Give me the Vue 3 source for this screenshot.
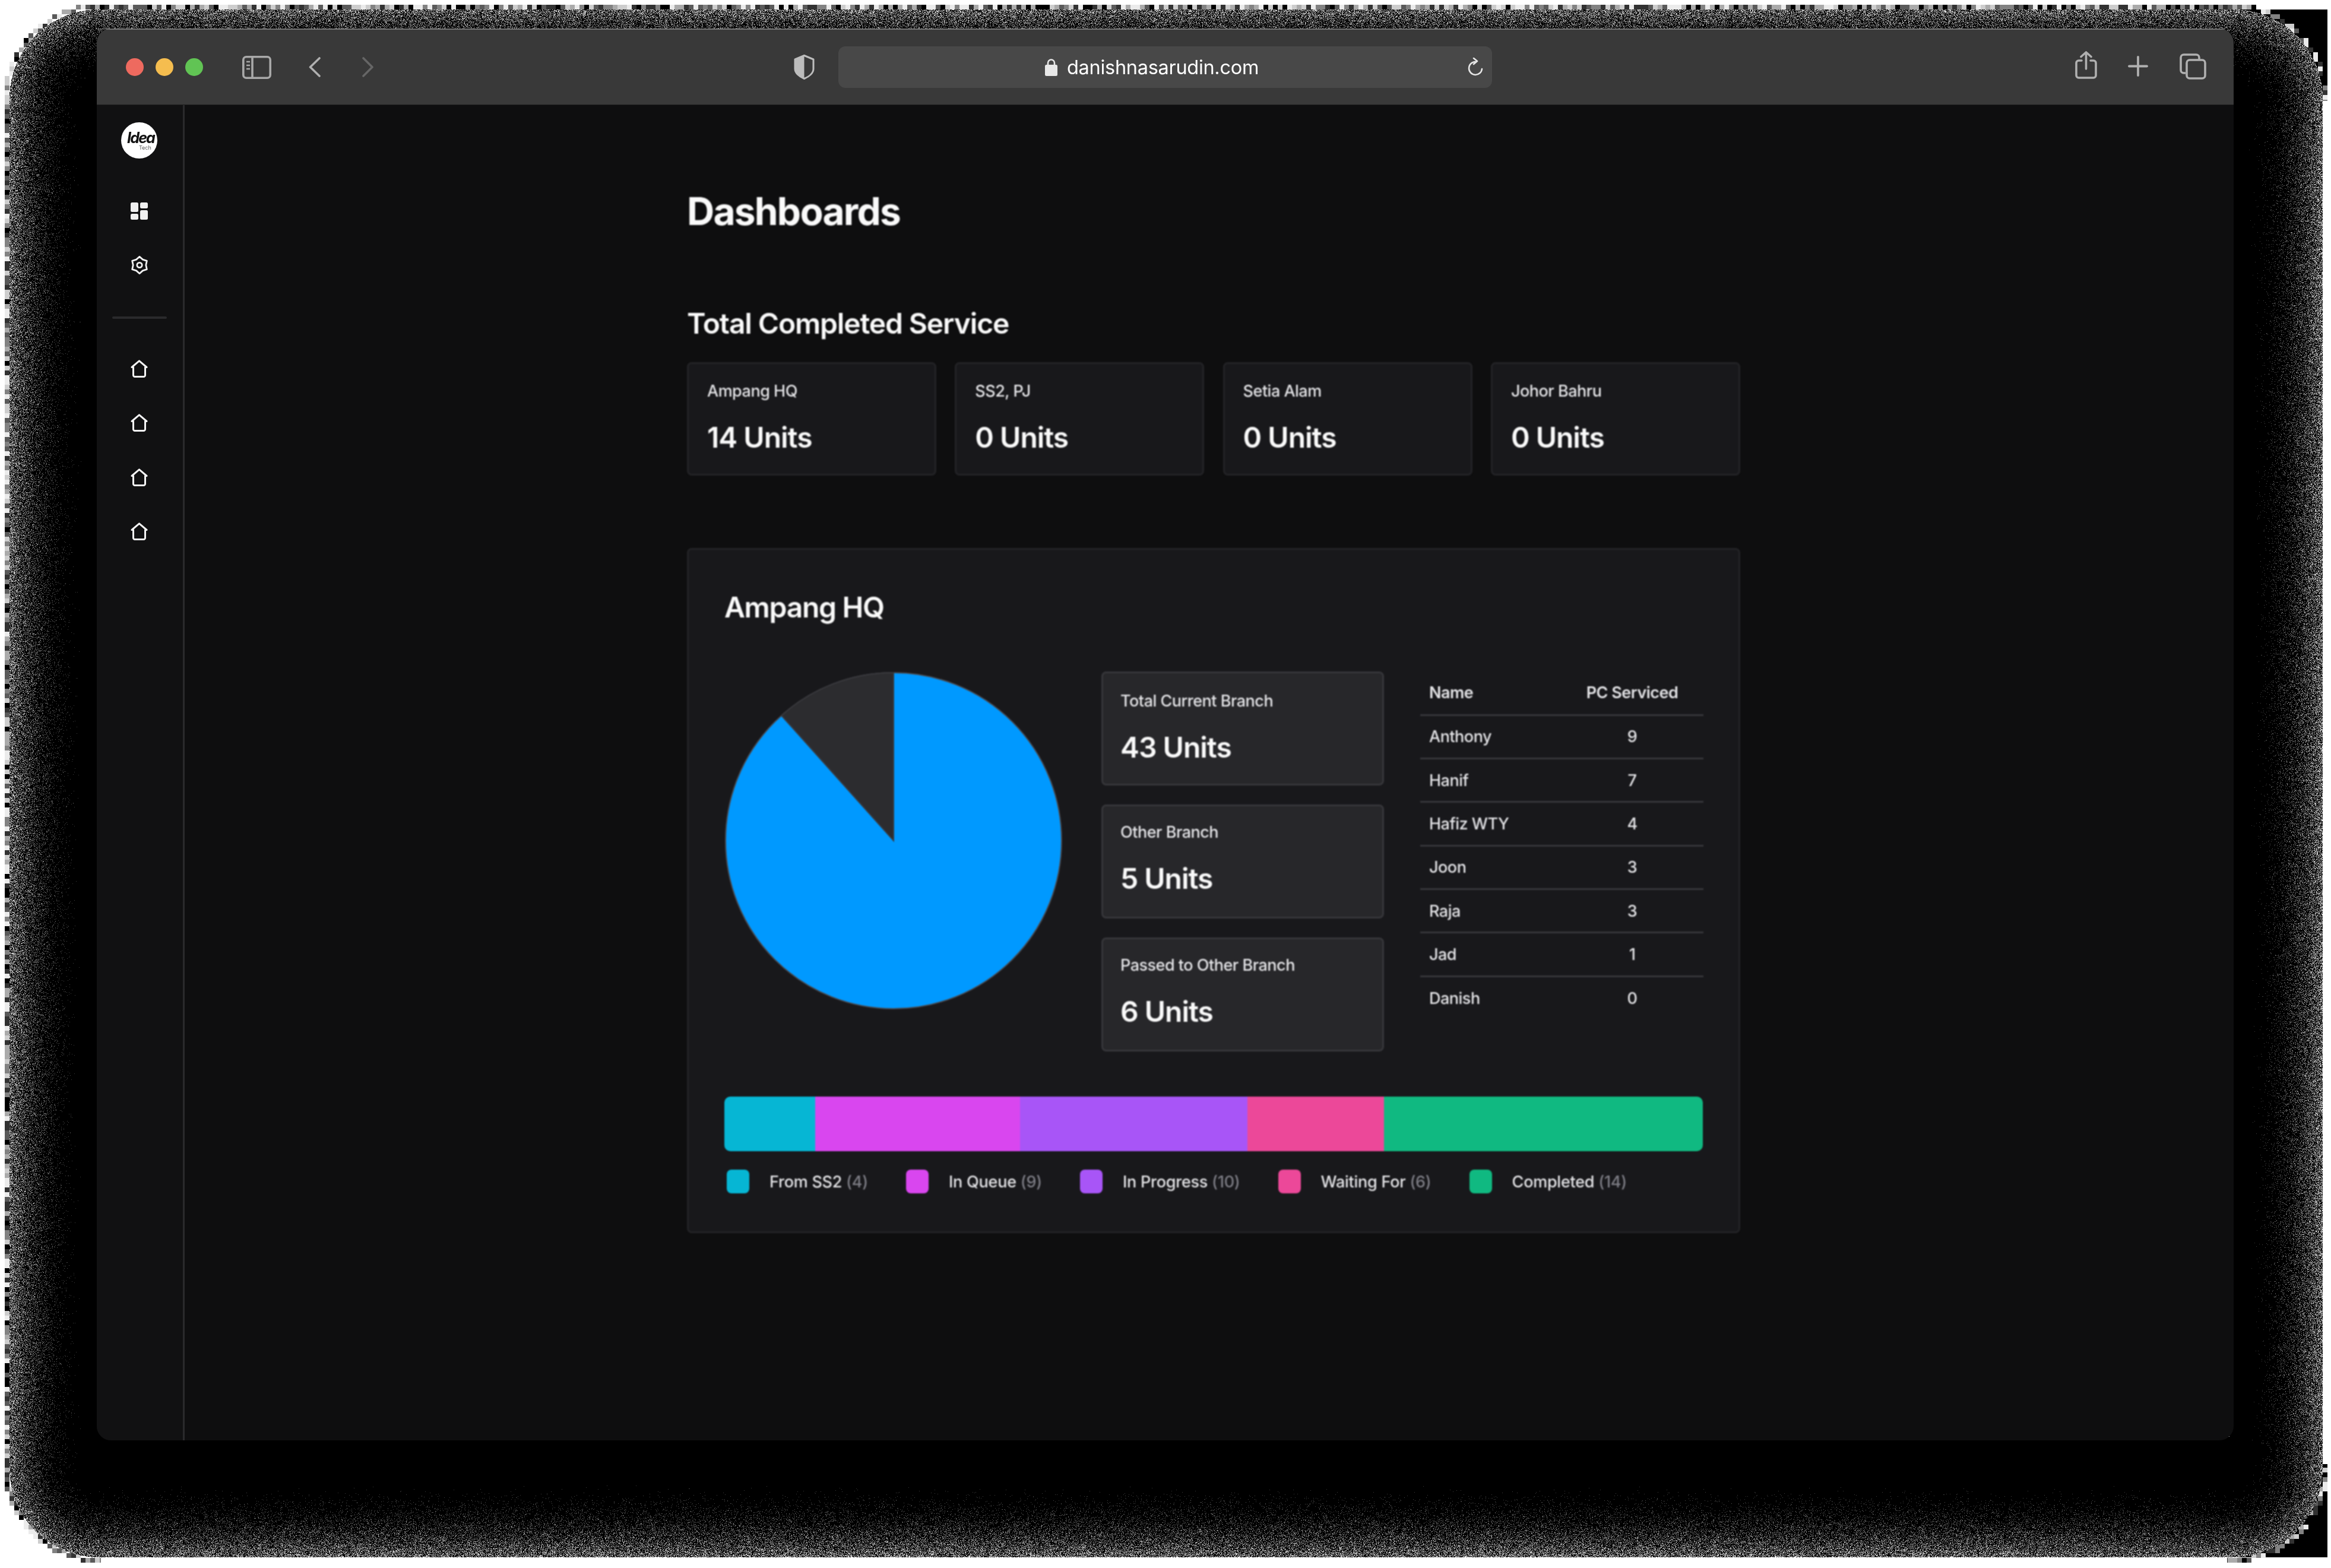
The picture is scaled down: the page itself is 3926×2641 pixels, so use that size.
<script setup>
import { onMounted, ref } from 'vue'

const canvas = ref(null)

const branches = [
  { name: 'Ampang HQ', value: '14 Units' },
  { name: 'SS2, PJ', value: '0 Units' },
  { name: 'Setia Alam', value: '0 Units' },
  { name: 'Johor Bahru', value: '0 Units' }
]
const stats = [
  { name: 'Total Current Branch', value: '43 Units' },
  { name: 'Other Branch', value: '5 Units' },
  { name: 'Passed to Other Branch', value: '6 Units' }
]
const people = [
  ['Anthony', 9], ['Hanif', 7], ['Hafiz WTY', 4], ['Joon', 3], ['Raja', 3], ['Jad', 1], ['Danish', 0]
]
const stages = [
  { name: 'From SS2', n: 4, color: '#06b6d4' },
  { name: 'In Queue', n: 9, color: '#d946ef' },
  { name: 'In Progress', n: 10, color: '#a855f7' },
  { name: 'Waiting For', n: 6, color: '#ec4899' },
  { name: 'Completed', n: 14, color: '#10b981' }
]

const R = 283
const angle = (5 / 43) * Math.PI * 2
const sliceX = 285 - R * Math.sin(angle)
const sliceY = 285 - R * Math.cos(angle)
const slicePath = `M285 285 L285 2 A${R} ${R} 0 0 0 ${sliceX.toFixed(2)} ${sliceY.toFixed(2)} Z`

const gearPts = []
for (let i = 0; i < 12; i++) {
  const a = (i * Math.PI) / 6 - Math.PI / 2
  const r = i % 2 === 0 ? 14.2 : 10.8
  gearPts.push(`${(15 + r * Math.cos(a)).toFixed(2)},${(15.5 + r * Math.sin(a)).toFixed(2)}`)
}
const gearPoly = gearPts.join(' ')

onMounted(() => {
  const W = 3926
  const H = 2641
  const ctx = canvas.value.getContext('2d')
  const img = ctx.createImageData(W, H)
  const buf = new Uint32Array(img.data.buffer)
  let seed = 12345
  const rnd = () => {
    seed = (seed * 1664525 + 1013904223) >>> 0
    return ((seed >>> 8) & 0xffff) / 65536
  }
  const x0 = 16, y0 = 16, x1 = 3912, y1 = 2623, r = 150
  const cx = (x0 + x1) / 2, cy = (y0 + y1) / 2
  const hx = (x1 - x0) / 2 - r, hy = (y1 - y0) / 2 - r
  const sdf = (x, y) => {
    const qx = Math.abs(x - cx) - hx
    const qy = Math.abs(y - cy) - hy
    const ax = Math.max(qx, 0), ay = Math.max(qy, 0)
    return Math.sqrt(ax * ax + ay * ay) + Math.min(Math.max(qx, qy), 0) - r
  }
  const gray = (v) => (255 << 24 | v << 16 | v << 8 | v) >>> 0
  const levels = [0, 50, 90, 130, 170, 205, 235]
  const band = 125
  for (let y = 0; y < H; y++) {
    for (let x = 0; x < W; x++) {
      const i = y * W + x
      if (x > 170 && x < 3755 && y > 55 && y < 2420) continue
      const sd = sdf(x + 0.5, y + 0.5)
      if (sd <= 0) {
        let v = 0
        const d = -sd
        if (d < band) {
          const f = 1 - d / band
          if (rnd() < 0.62 * Math.pow(f, 2.1)) {
            v = Math.round(55 + rnd() * 200 * Math.pow(f, 1.4))
          }
        }
        buf[i] = gray(v)
        continue
      }
      if (x >= 3762 && x < 3920 && y < 2623 && ((y >= 16 && y < 166) || y >= 2473)) buf[i] = gray(0)
      const bx = (x >> 3) * 8 + 4
      const by = (y >> 3) * 8 + 4
      const bsd = sdf(bx, by)
      if (bsd > 0 && bsd < 8) {
        const corner = (x < 170 || x > 3750) && (y < 170 || y > 2465)
        if (corner || (x < 3800 && y < 2500)) {
          const h = Math.abs(Math.imul(bx, 73856093) ^ Math.imul(by, 19349663) ^ 0x5bd1e995)
          buf[i] = gray(levels[(h >>> 7) % levels.length])
        }
      }
    }
  }
  ctx.putImageData(img, 0, 0)
})
</script>

<template>
  <div class="page">
    <canvas ref="canvas" class="shadow" width="3926" height="2641"></canvas>
    <div class="window">
      <header class="titlebar">
        <div class="lights">
          <span class="light red"></span><span class="light yellow"></span><span class="light green"></span>
        </div>
        <svg class="i-side" width="49" height="39" viewBox="0 0 49 39" fill="none" stroke="#a9a9a9" stroke-width="3.6">
          <rect x="1.8" y="1.8" width="45.4" height="35.4" rx="5" />
          <path d="M17 2v35" />
          <path d="M7 10h6M7 16h6M7 22h6" stroke-width="2.6" />
        </svg>
        <svg class="i-back" width="20" height="34" viewBox="0 0 20 34" fill="none" stroke="#b0b0b0" stroke-width="3.6" stroke-linecap="round" stroke-linejoin="round">
          <path d="M18 2 2.5 17 18 32" />
        </svg>
        <svg class="i-forward" width="19" height="34" viewBox="0 0 19 34" fill="none" stroke="#666" stroke-width="3.6" stroke-linecap="round" stroke-linejoin="round">
          <path d="M2 2l15 15L2 32" />
        </svg>
        <svg class="i-shield" width="35" height="42" viewBox="0 0 35 42" fill="none">
          <path d="M17.5 1.5 33 8v16c0 7-7 13-15.5 16.5C9 37 2 31 2 24V8z" fill="#3a3a3a" stroke="#bdbdbd" stroke-width="3" stroke-linejoin="round" />
          <path d="M17.5 1.5V40.5C9 37 2 31 2 24V8z" fill="#bdbdbd" />
        </svg>
        <div class="urlbar">
          <div class="url">
            <svg width="21" height="29" viewBox="0 0 21 29" fill="none">
              <path d="M5 11V7a5.500 5.500 0 0 1 11 0v4" stroke="#e8e8e8" stroke-width="2.600" />
              <rect y="10" width="21" height="19" rx="2.500" fill="#e8e8e8" />
            </svg>
            <span>danishnasarudin.com</span>
          </div>
          <svg class="reload" width="26" height="32" viewBox="0 0 26 32" fill="none" stroke="#e6e6e6" stroke-width="2.600" stroke-linecap="round" stroke-linejoin="round">
            <path d="M13 7A11 11 0 1 0 24 19" />
            <path d="M10 1l6 5-6 5" />
          </svg>
        </div>
        <svg class="i-share" width="37" height="47" viewBox="0 0 37 47" fill="none" stroke="#b0b0b0" stroke-width="3.600" stroke-linecap="round" stroke-linejoin="round">
          <path d="M11 16H6a4 4 0 0 0-4 4v21a4 4 0 0 0 4 4h25a4 4 0 0 0 4-4V20a4 4 0 0 0-4-4h-5" />
          <path d="M18.500 30V2M10 9.500 18.500 2 27 9.500" />
        </svg>
        <svg class="i-plus" width="34" height="35" viewBox="0 0 34 35" fill="none" stroke="#b0b0b0" stroke-width="3.800" stroke-linecap="round">
          <path d="M17 2v31M2 17.500h30" />
        </svg>
        <svg class="i-tabs" width="45" height="44" viewBox="0 0 45 44" fill="none" stroke="#b0b0b0" stroke-width="3.600" stroke-linejoin="round">
          <path d="M10 33H7a5 5 0 0 1-5-5V7a5 5 0 0 1 5-5h21a5 5 0 0 1 5 5v3" />
          <rect x="12" y="11" width="31" height="31" rx="5" />
        </svg>
      </header>

      <div class="body">
        <aside class="sidebar">
          <div class="logo"><b>Idea</b><small>Tech</small></div>
          <svg class="i-dash" width="29" height="29" viewBox="0 0 29 29" fill="#f0f0f0">
            <rect width="13" height="16" rx="2.500" />
            <rect y="19" width="13" height="10" rx="2.500" />
            <rect x="16" width="13" height="10" rx="2.500" />
            <rect x="16" y="13" width="13" height="16" rx="2.500" />
          </svg>
          <svg class="i-gear" width="30" height="31" viewBox="0 0 30 31" fill="none" stroke="#f2f2f2" stroke-width="2.800" stroke-linejoin="round">
            <polygon :points="gearPoly" />
            <circle cx="15" cy="15.500" r="4.200" />
          </svg>
          <div class="divider"></div>
          <svg v-for="n in 4" :key="n" class="i-home" width="29" height="30" viewBox="0 0 29 30" fill="none" stroke="#f5f5f5" stroke-width="3" stroke-linejoin="round" stroke-linecap="round">
            <path d="M14.500 1.800 27 12.500h-2.500V26a2.500 2.500 0 0 1-2.500 2.500H7A2.500 2.500 0 0 1 4.500 26V12.500H2z" />
          </svg>
        </aside>

        <main class="main">
          <h1>Dashboards</h1>
          <h2>Total Completed Service</h2>
          <section class="branches">
            <article v-for="b in branches" :key="b.name" class="card">
              <p class="label">{{ b.name }}</p>
              <p class="value">{{ b.value }}</p>
            </article>
          </section>

          <section class="panel">
            <h2 class="panel-title">Ampang HQ</h2>
            <div class="overview">
              <svg class="pie" width="570" height="570" viewBox="0 0 570 570">
                <circle cx="285" cy="285" :r="R" fill="#0099ff" stroke="#4a4a50" stroke-width="2" />
                <path :d="slicePath" fill="#2c2c2f" stroke="#3a3a3e" stroke-width="2" />
              </svg>
              <div class="stats">
                <article v-for="s in stats" :key="s.name" class="card stat">
                  <p class="label">{{ s.name }}</p>
                  <p class="value">{{ s.value }}</p>
                </article>
              </div>
              <table class="people">
                <thead>
                  <tr><th class="name">Name</th><th class="count">PC Serviced</th></tr>
                </thead>
                <tbody>
                  <tr v-for="p in people" :key="p[0]">
                    <td class="name">{{ p[0] }}</td><td class="count">{{ p[1] }}</td>
                  </tr>
                </tbody>
              </table>
            </div>
            <div class="bar">
              <span v-for="s in stages" :key="s.name" :style="{ flexGrow: s.n, background: s.color }"></span>
            </div>
            <ul class="legend">
              <li v-for="s in stages" :key="s.name">
                <i :style="{ background: s.color }"></i>
                <span>{{ s.name }} <em>({{ s.n }})</em></span>
              </li>
            </ul>
          </section>
        </main>
      </div>
    </div>
  </div>
</template>

<style>
html, body { margin: 0; background: #fff; }
</style>

<style scoped>
* { box-sizing: border-box; }
.page {
  position: relative;
  width: 3926px;
  height: 2641px;
  overflow: hidden;
  padding: 48px 0 0 163px;
  font-family: Inter, "Liberation Sans", sans-serif;
  color: #fafafa;
}
.shadow { position: absolute; left: 0; top: 0; }
.window {
  position: relative;
  width: 3599px;
  height: 2378px;
  border-radius: 24px;
  overflow: hidden;
  background: #0e0e0f;
  display: flex;
  flex-direction: column;
}
.titlebar {
  flex: none;
  height: 129px;
  background: #393939;
  border-top: 2px solid #757575;
  border-bottom: 1px solid #1d1d1d;
  display: flex;
  align-items: center;
  padding: 0 46px 0 49px;
}
.titlebar > * { flex: none; filter: blur(0.5px); }
.lights { display: flex; gap: 20px; }
.light { width: 30px; height: 30px; border-radius: 50%; }
.red { background: #ee6a5f; }
.yellow { background: #f5bd4f; }
.green { background: #61c454; }
.i-side { margin-left: 66px; }
.i-back { margin-left: 63px; }
.i-forward { margin-left: 70px; }
.i-shield { margin-left: 708px; }
.urlbar {
  margin-left: 40px;
  width: 1101px;
  height: 70px;
  border-radius: 12px;
  background: #484848;
  display: grid;
  grid-template-columns: 348px auto 1fr;
  align-items: center;
}
.url {
  grid-column: 2;
  display: flex;
  align-items: center;
  gap: 16px;
  font-size: 32.5px;
  font-weight: 400;
  color: #fff;
  letter-spacing: -0.3px;
}
.reload { grid-column: 3; justify-self: end; margin-right: 15px; }
.i-share { margin-left: auto; margin-top: -8px; }
.i-plus { margin-left: 52px; margin-top: -4px; }
.i-tabs { margin-left: 53px; margin-top: -3px; }

.body { flex: 1; display: flex; min-height: 0; }
.sidebar {
  flex: none;
  width: 148px;
  background: #111112;
  border-right: 3px solid #2a2a2c;
  display: flex;
  flex-direction: column;
  align-items: center;
  padding: 29px 2px 0 0;
  filter: blur(0.7px);
}
.logo {
  width: 61px;
  height: 61px;
  border-radius: 50%;
  background: #fff;
  color: #111;
  position: relative;
  overflow: hidden;
  flex: none;
}
.logo b {
  position: absolute;
  left: 10px;
  top: 11px;
  font-size: 25px;
  line-height: 30px;
  font-style: italic;
  font-weight: 700;
  letter-spacing: -1.800px;
}
.logo small {
  position: absolute;
  left: 30px;
  top: 38px;
  font-size: 9px;
  line-height: 10px;
  color: #555;
}
.i-dash { margin-top: 74px; flex: none; }
.i-gear { margin-top: 61px; flex: none; }
.divider { margin-top: 71px; width: 92px; height: 4px; flex: none; background: #2a2a2c; border-radius: 2px; }
.i-home { margin-top: 61.300px; flex: none; }
.divider + .i-home { margin-top: 69px; }

.main { flex: 1; min-width: 0; padding: 140px 0 0 846px; filter: blur(1px); }
h1, h2, p, ul { margin: 0; padding: 0; }
h1 { font-size: 64px; line-height: 78px; font-weight: 700; letter-spacing: -1.800px; }
h2 { font-size: 48px; line-height: 58px; font-weight: 600; letter-spacing: -1.150px; margin-top: 121px; }
.branches { display: grid; grid-template-columns: repeat(4, 420px); column-gap: 31.300px; margin-top: 36px; }
.card {
  height: 191px;
  background: #18181b;
  border: 3px solid #232326;
  border-radius: 8px;
  padding: 28px 31px 0;
}
.label { font-size: 27px; line-height: 36px; font-weight: 500; color: #e4e4e7; letter-spacing: -0.5px; }
.value { font-size: 48px; line-height: 58px; font-weight: 600; margin-top: 31px; letter-spacing: -1px; }
.panel {
  width: 1774px;
  height: 1154px;
  margin-top: 122px;
  background: #18181b;
  border: 3px solid #232326;
  border-radius: 8px;
  padding: 68px 60px 0 60px;
}
.panel-title { margin-top: 0; letter-spacing: -1.300px; }
.overview { display: flex; align-items: flex-start; margin-top: 79px; }
.pie { flex: none; display: block; }
.stats { flex: none; width: 476px; margin-left: 65px; display: flex; flex-direction: column; gap: 32px; }
.stat { height: 192px; background: #27272a; border-color: #36363a; padding: 29px 29px 0; }
.stat:nth-child(n + 2) { padding-top: 26px; }
.people {
  flex: none;
  width: 477px;
  margin-left: 61px;
  border-collapse: collapse;
  font-size: 27px;
  letter-spacing: -0.5px;
  color: #e4e4e7;
}
.people tr { height: 73.300px; }
.people tbody tr { border-top: 3px solid #36363a; }
.people th, .people td { padding: 0; font-weight: 500; }
.people th { font-weight: 600; }
.name { text-align: left; padding-left: 15px !important; }
.count { width: 240px; text-align: center; }
.bar {
  display: flex;
  height: 92px;
  margin-top: 76px;
  border-radius: 10px;
  overflow: hidden;
}
.bar span { flex-basis: 0; }
.legend { list-style: none; display: flex; gap: 64px; margin-top: 31px; padding-left: 4px; }
.legend li { display: flex; align-items: center; gap: 34px; font-size: 27px; font-weight: 500; color: #e4e4e7; letter-spacing: -0.25px; }
.legend i { width: 38px; height: 40px; border-radius: 8px; display: block; }
.legend em { font-style: normal; color: #7d7d85; }
</style>
